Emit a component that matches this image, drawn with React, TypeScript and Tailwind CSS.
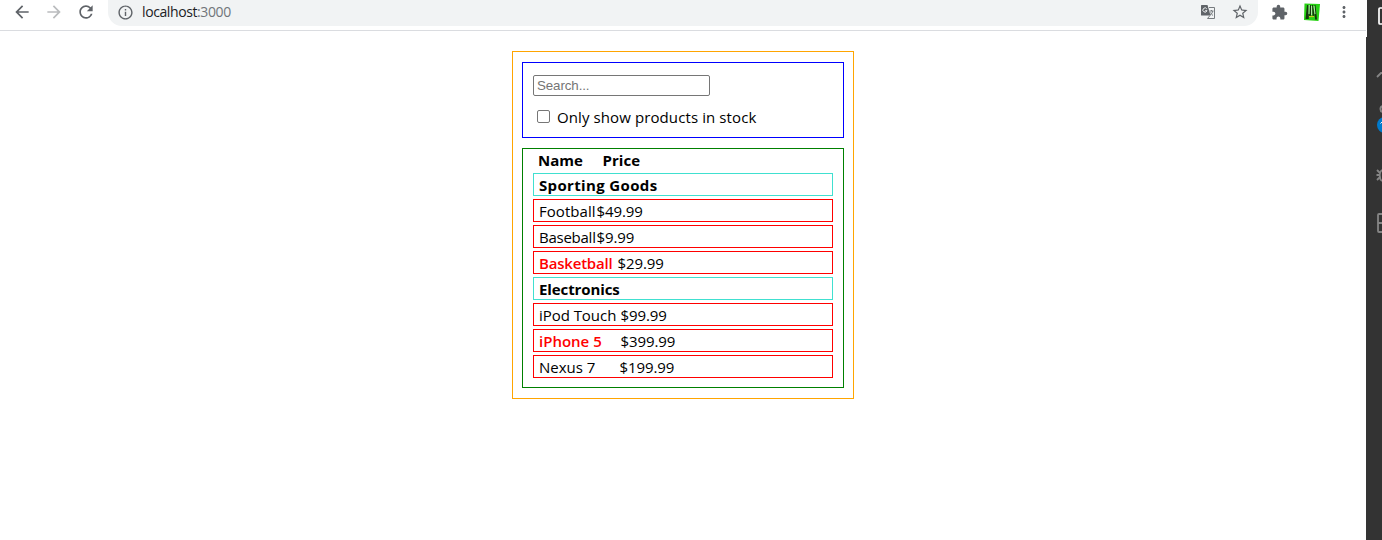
import { useState } from "react";
import { MdArrowBack, MdArrowForward, MdRefresh, MdInfoOutline, MdStarBorder, MdExtension, MdMoreVert } from "react-icons/md";

type Row = { kind: "category"; name: string; tracking: string } | { kind: "product"; name: string; price: string; stocked: boolean; nameWidth: string; tracking: string };

const rows: Row[] = [
  { kind: "category", name: "Sporting Goods", tracking: "tracking-[0.35px]" },
  { kind: "product", name: "Football", price: "$49.99", stocked: true, nameWidth: "w-[57px]", tracking: "tracking-[0.05px]" },
  { kind: "product", name: "Baseball", price: "$9.99", stocked: true, nameWidth: "w-[57px]", tracking: "tracking-[-0.25px]" },
  { kind: "product", name: "Basketball", price: "$29.99", stocked: false, nameWidth: "w-[78px]", tracking: "tracking-[-0.2px]" },
  { kind: "category", name: "Electronics", tracking: "tracking-[-0.1px]" },
  { kind: "product", name: "iPod Touch", price: "$99.99", stocked: true, nameWidth: "w-[81px]", tracking: "tracking-[-0.05px]" },
  { kind: "product", name: "iPhone 5", price: "$399.99", stocked: false, nameWidth: "w-[81px]", tracking: "tracking-[0px]" },
  { kind: "product", name: "Nexus 7", price: "$199.99", stocked: true, nameWidth: "w-[80px]", tracking: "tracking-[0px]" },
];

function BrowserBar() {
  return (
    <header className="flex h-[31px] shrink-0 items-start border-b border-[#dadce0] text-[#5f6368]">
      <div className="flex h-6 items-center pl-3">
        <MdArrowBack size={20} />
        <MdArrowForward size={20} className="ml-3 text-[#babcbe]" />
        <MdRefresh size={20} className="ml-3" />
      </div>
      <div className="ml-3 flex h-[26px] w-[1150px] items-start rounded-b-[14px] bg-[#f1f3f4]">
        <div className="flex h-6 w-full items-center pl-[9px] pr-[9px]">
          <MdInfoOutline size={17} />
          <span className="ml-2 text-[14px] leading-none tracking-[-0.4px] font-['Open_Sans',sans-serif] text-[#202124]">
            localhost<span className="text-[#70757a]">:3000</span>
          </span>
          <TranslateIcon />
          <MdStarBorder size={18} className="ml-[15px]" />
        </div>
      </div>
      <div className="flex h-6 items-center pl-[13px]">
        <MdExtension size={17} />
        <FaviconTile />
        <MdMoreVert size={18} className="ml-[15px]" />
      </div>
    </header>
  );
}

function TranslateIcon() {
  return (
    <svg className="ml-auto" width="16" height="16" viewBox="0 0 16 16" fill="none">
      <path d="M1.5 1H7.5L10.5 11.5H1.5Q1 11.5 1 11V1.5Q1 1 1.5 1Z" fill="#5f6368" />
      <path d="M6.8 4.9A2.1 2.1 0 1 0 7 6.7H5.2" stroke="#f1f3f4" strokeWidth="1" />
      <path d="M9 3.5H14.5V14.5H7.5L10 11.5M9.5 7H13.5M11.5 6V7M12.8 7Q12.2 10 10 11M10.5 8.5Q11.5 10.5 13 11.5" stroke="#777b7f" strokeWidth="1" />
    </svg>
  );
}

function FaviconTile() {
  return (
    <svg className="ml-[15px]" width="17" height="20" viewBox="0 0 17 20">
      <path d="M1.5 1.5L17 2L15.5 19L1 18Z" fill="#27d214" />
      <path d="M4 3H5.5L5.8 17H2.5ZM7 3H8V14H6ZM9 3H10L11.5 14H9.5ZM11.5 3H12.5L14 17.5H12Z" fill="#16340f" />
      <path d="M6.2 3L6 12M8.6 4V13M11 4L12 12" stroke="#c9efc0" strokeWidth="0.9" />
      <path d="M6 14.5H11" stroke="#c8c524" strokeWidth="1.2" />
    </svg>
  );
}

function SearchBar() {
  const [inStockOnly, setInStockOnly] = useState(false);
  return (
    <form className="flex h-[76px] flex-col border border-[#0000ff] pl-[10px] pt-3">
      <input
        type="text"
        placeholder="Search..."
        className="h-[21px] w-[177px] rounded-[2px] border border-[#767676] px-[3px] text-[13.33px] leading-none tracking-[-0.1px] font-['Liberation_Sans',sans-serif] placeholder:text-[#757575]"
      />
      <label className="mt-[10px] flex h-[22px] items-center pl-1">
        <input
          type="checkbox"
          checked={inStockOnly}
          onChange={(e) => setInStockOnly(e.target.checked)}
          className="mb-[1px] size-[13px] appearance-none rounded-[2px] border border-[#767676] bg-white"
        />
        <span className="ml-[7px] whitespace-nowrap text-[15px] tracking-[0.1px]">Only show products in stock</span>
      </label>
    </form>
  );
}

function ProductTable() {
  return (
    <section className="mt-[10px] flex h-[240px] flex-col border border-[#008000] px-[10px]">
      <div className="flex h-6 items-center pb-[2px] pl-[5px] font-bold">
        <span className="w-[65px]">Name</span>
        <span className="-ml-[0.4px]">Price</span>
      </div>
      <div className="flex flex-col gap-[3px]">
        {rows.map((row) =>
          row.kind === "category" ? (
            <div key={row.name} className="flex h-[23px] items-center border border-[#40e0d0] pl-[5px] font-bold">
              <span className={row.tracking}>{row.name}</span>
            </div>
          ) : (
            <div key={row.name} className="flex h-[23px] items-center border border-[#ff0000] pl-[5px]">
              <span className={`${row.nameWidth} whitespace-nowrap ${row.tracking} ${row.stocked ? "" : "font-semibold text-[#ff0000]"}`}>{row.name}</span>
              <span className="pl-[0.5px] tracking-[-0.1px]">{row.price}</span>
            </div>
          )
        )}
      </div>
    </section>
  );
}

function EditorStrip() {
  return (
    <aside className="w-4 shrink-0 bg-[#333333]">
      <svg width="16" height="240" viewBox="0 0 16 240" fill="none">
        <path d="M0 0H1V37H0Z" fill="#fff" />
        <path d="M17 8H14Q13 8 13 9V23Q13 24 14 24H17" stroke="#fff" strokeWidth="1.7" />
        <path d="M11 77L15 73H16" stroke="#858585" strokeWidth="1.8" />
        <circle cx="17.5" cy="109" r="3" stroke="#858585" strokeWidth="2" />
        <circle cx="19" cy="125" r="8" fill="#007acc" />
        <path d="M14.5 123.5L16 122" stroke="#fff" />
        <path d="M11 170L14 173M10.5 175H14M11 180L14 177M16 170Q13 172 14 177Q14 180 16 181" stroke="#858585" strokeWidth="1.8" />
        <path d="M17 214H13Q12 214 12 215V231Q12 232 13 232H17M12 223H17" stroke="#858585" strokeWidth="1.8" />
      </svg>
    </aside>
  );
}

export default function App() {
  return (
    <div className="flex h-[540px] w-[1382px] overflow-hidden bg-white">
      <div className="flex min-w-0 flex-1 flex-col">
        <BrowserBar />
        <main className="ml-[512px] mt-5 flex h-[348px] w-[342px] flex-col border border-[#ffa500] px-[9px] pt-[10px] text-[15px] leading-5 text-black font-['Open_Sans','Noto_Sans',sans-serif]">
          <SearchBar />
          <ProductTable />
        </main>
      </div>
      <EditorStrip />
    </div>
  );
}
